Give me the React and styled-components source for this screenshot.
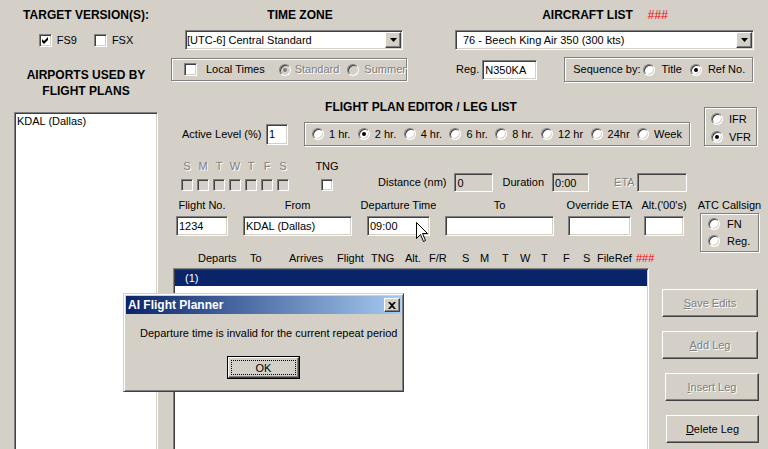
import React from 'react';
import styled, { createGlobalStyle, css } from 'styled-components';

const GlobalStyle = createGlobalStyle`
  html, body { margin: 0; padding: 0; background: #d4d0c8; }
  body { font-family: "Liberation Sans", Arial, sans-serif; font-size: 11px; color: #000; }
  * { box-sizing: border-box; }
`;

const sunken = css`
  border: 1px solid;
  border-color: #808080 #ffffff #ffffff #808080;
  box-shadow: inset 1px 1px 0 #404040, inset -1px -1px 0 #d4d0c8;
`;
const raised = css`
  border: 1px solid;
  border-color: #ffffff #404040 #404040 #ffffff;
  box-shadow: inset -1px -1px 0 #808080;
`;
const etched = css`
  border: 1px solid #808080;
  box-shadow: inset 1px 1px 0 #ffffff, 1px 1px 0 #ffffff;
`;
const disabledText = css`
  color: #808080;
  text-shadow: 1px 1px 0 #ffffff;
`;

const Window = styled.div`
  position: relative;
  width: 768px;
  height: 449px;
  overflow: hidden;
  display: flex;
  background: #d4d0c8;
`;

const LeftCol = styled.div`
  width: 172px;
  flex: none;
  display: flex;
  flex-direction: column;
  align-items: center;
  padding-top: 8px;
`;

const Heading = styled.div`
  font-weight: bold;
  font-size: 12px;
  line-height: ${p => p.$lh || 14}px;
  text-align: center;
  white-space: nowrap;
  margin-top: ${p => p.$mt || 0}px;
  padding-left: ${p => p.$pl || 0}px;
  padding-right: ${p => p.$pr || 0}px;
`;

const Red = styled.span`
  color: #ff0000;
  font-weight: normal;
  margin-left: ${p => p.$ml || 0}px;
`;

const CheckRow = styled.div`
  display: flex;
  align-items: center;
  gap: 17px;
  margin-top: 12px;
  height: 13px;
`;

const CheckItem = styled.label`
  display: flex;
  align-items: center;
  gap: 5px;
  line-height: 13px;
`;

const BoxWrap = styled.span`
  ${sunken};
  flex: none;
  display: flex;
  width: ${p => p.$s || 13}px;
  height: ${p => p.$s || 13}px;
  background: ${p => (p.$disabled ? '#d4d0c8' : '#ffffff')};
  margin-left: ${p => p.$ml || 0}px;
  margin-top: ${p => p.$mt || 0}px;
`;

const CheckBox = ({ checked, disabled, size, ml, mt }) => (
  <BoxWrap $disabled={disabled} $s={size} $ml={ml} $mt={mt}>
    {checked && (
      <svg width="11" height="11" viewBox="0 0 11 11">
        <path d="M2 4 L4 6 L8 2 L8 5 L4 9 L2 7 Z" fill="#000" />
      </svg>
    )}
  </BoxWrap>
);

const Radio = styled.span`
  position: relative;
  flex: none;
  width: 12px;
  height: 12px;
  border-radius: 50%;
  border: 1px solid;
  border-color: #808080 #ffffff #ffffff #808080;
  background: ${p => (p.$disabled ? '#d4d0c8' : '#ffffff')};
  box-shadow: inset 1px 1px 0 #404040, inset -1px -1px 0 #d4d0c8;
  margin-left: ${p => p.$ml || 0}px;
  &::after {
    content: '';
    display: ${p => (p.$checked ? 'block' : 'none')};
    position: absolute;
    left: 3px;
    top: 3px;
    width: 4px;
    height: 4px;
    border-radius: 50%;
    background: ${p => (p.$disabled ? '#808080' : '#000000')};
  }
`;

const Text = styled.span`
  white-space: nowrap;
  line-height: 13px;
  flex: none;
  margin-left: ${p => p.$ml || 0}px;
  width: ${p => (p.$w ? `${p.$w}px` : 'auto')};
  ${p => p.$disabled && disabledText};
`;

const AirportList = styled.div`
  ${sunken};
  background: #ffffff;
  width: 144px;
  height: 400px;
  flex: none;
  margin-top: 13px;
  padding: 2px 2px;
  line-height: 13px;
`;

const Main = styled.div`
  flex: 1;
  min-width: 0;
  display: flex;
  flex-direction: column;
  padding-top: 8px;
`;

const TopRow = styled.div`
  display: flex;
  align-items: flex-start;
`;

const Block = styled.div`
  display: flex;
  flex-direction: column;
  flex: none;
  width: ${p => p.$w}px;
  margin-left: ${p => p.$ml || 0}px;
`;

const ComboBox = styled.div`
  ${sunken};
  background: #ffffff;
  height: 20px;
  width: ${p => p.$w}px;
  margin-top: 8px;
  margin-left: ${p => p.$ml || 0}px;
  display: flex;
  align-items: center;
  padding: 0 1px 0 ${p => p.$pad || 1}px;
`;

const ComboText = styled.span`
  flex: 1;
  white-space: nowrap;
  overflow: hidden;
`;

const ComboButton = styled.span`
  ${raised};
  background: #d4d0c8;
  width: 16px;
  height: 16px;
  flex: none;
  display: flex;
  align-items: center;
  justify-content: center;
`;

const Combo = ({ w, ml, pad, children }) => (
  <ComboBox $w={w} $ml={ml} $pad={pad}>
    <ComboText>{children}</ComboText>
    <ComboButton>
      <svg width="7" height="4" viewBox="0 0 7 4">
        <path d="M0 0 H7 L3.5 4 Z" fill="#000" />
      </svg>
    </ComboButton>
  </ComboBox>
);

const Group = styled.div`
  ${etched};
  flex: none;
  display: flex;
  flex-direction: ${p => (p.$col ? 'column' : 'row')};
  align-items: ${p => (p.$col ? 'flex-start' : 'center')};
  justify-content: ${p => p.$justify || 'flex-start'};
  gap: ${p => p.$gap || 0}px;
  width: ${p => p.$w}px;
  height: ${p => p.$h}px;
  margin-left: ${p => p.$ml || 0}px;
  margin-top: ${p => p.$mt || 0}px;
  padding: ${p => p.$pad || '0'};
`;

const RadioItem = styled.div`
  display: flex;
  align-items: center;
  height: 12px;
`;

const Field = styled.div`
  ${sunken};
  flex: none;
  background: ${p => (p.$ro ? '#d4d0c8' : '#ffffff')};
  width: ${p => p.$w}px;
  height: ${p => p.$h || 20}px;
  margin-left: ${p => p.$ml || 0}px;
  margin-top: ${p => p.$mt || 0}px;
  padding: 0 1px 0 2px;
  display: flex;
  align-items: center;
  white-space: nowrap;
  overflow: hidden;
`;

const RegRow = styled.div`
  display: flex;
  align-items: center;
  height: 25px;
  margin-top: 7px;
`;

const FPRow = styled.div`
  display: flex;
  align-items: flex-start;
  margin-top: 18px;
`;

const ActiveRow = styled.div`
  display: flex;
  align-items: center;
  height: 24px;
  margin-top: 8px;
  padding-left: 10px;
`;

const DaysRow = styled.div`
  display: flex;
  align-items: flex-start;
  height: 32px;
  margin-top: 14px;
`;

const DayCell = styled.div`
  display: flex;
  flex-direction: column;
  align-items: center;
  flex: none;
  width: ${p => p.$w || 16}px;
  margin-left: ${p => p.$ml || 0}px;
  line-height: 12px;
`;

const InlineGroup = styled.div`
  display: flex;
  align-items: center;
  height: 19px;
  margin-top: 13px;
  margin-left: ${p => p.$ml || 0}px;
`;

const FieldsRow = styled.div`
  display: flex;
  align-items: flex-start;
  margin-top: 7px;
`;

const FieldCol = styled.div`
  display: flex;
  flex-direction: column;
  align-items: center;
  flex: none;
  width: ${p => p.$w}px;
  margin-left: ${p => p.$ml || 0}px;
`;

const HeaderRow = styled.div`
  display: flex;
  margin-left: 26px;
  line-height: 12px;
  height: 12px;
`;

const HeaderCell = styled.span`
  flex: none;
  width: ${p => p.$w}px;
  white-space: nowrap;
  color: ${p => (p.$red ? '#ff0000' : '#000')};
`;

const ListArea = styled.div`
  display: flex;
  align-items: flex-start;
  margin-top: 4px;
`;

const LegList = styled.div`
  ${sunken};
  background: #ffffff;
  width: 476px;
  height: 220px;
  flex: none;
  margin-left: 1px;
  padding: 1px 1px;
`;

const SelectedRow = styled.div`
  height: 16px;
  line-height: 16px;
  background: #0a246a;
  color: #ffffff;
  padding-left: 10px;
`;

const ButtonCol = styled.div`
  display: flex;
  flex-direction: column;
  gap: 14px;
  margin-top: 21px;
  margin-left: 13px;
`;

const Button = styled.button`
  ${raised};
  background: #d4d0c8;
  font: inherit;
  font-size: 11px;
  width: ${p => p.$w || 96}px;
  height: 28px;
  margin-left: ${p => p.$ml || 0}px;
  padding: 0;
  ${p => (p.$disabled ? disabledText : 'color: #000;')};
  u { text-decoration: underline; }
`;

const Dialog = styled.div`
  position: absolute;
  left: 123px;
  top: 293px;
  width: 281px;
  height: 99px;
  background: #d4d0c8;
  border: 1px solid;
  border-color: #d4d0c8 #404040 #404040 #d4d0c8;
  box-shadow: inset 1px 1px 0 #ffffff, inset -1px -1px 0 #808080;
  padding: 2px;
  display: flex;
  flex-direction: column;
`;

const TitleBar = styled.div`
  height: 18px;
  flex: none;
  display: flex;
  align-items: center;
  justify-content: space-between;
  padding-left: 2px;
  background: linear-gradient(to right, #0a246a, #a6caf0);
  color: #ffffff;
  font-weight: bold;
  font-size: 12px;
`;

const CloseButton = styled.span`
  ${raised};
  background: #d4d0c8;
  width: 16px;
  height: 14px;
  margin-right: 1px;
  display: flex;
  align-items: center;
  justify-content: center;
`;

const Message = styled.div`
  margin-top: 13px;
  padding-left: 14px;
  line-height: 13px;
  white-space: nowrap;
`;

const OkButton = styled.button`
  align-self: center;
  margin-top: 16px;
  width: 73px;
  height: 23px;
  padding: 0;
  background: #d4d0c8;
  border: 1px solid #000;
  font: inherit;
  font-size: 11px;
  color: #000;
  display: flex;
  align-items: stretch;
  justify-content: stretch;
`;

const OkInner = styled.span`
  flex: 1;
  display: flex;
  border: 1px solid;
  border-color: #ffffff #404040 #404040 #ffffff;
  box-shadow: inset -1px -1px 0 #808080;
  padding: 2px;
`;

const FocusRect = styled.span`
  flex: 1;
  display: flex;
  align-items: center;
  justify-content: center;
  border: 1px dotted #000;
`;

const Cursor = styled.svg`
  position: absolute;
  left: 416px;
  top: 222px;
`;

const days = ['S', 'M', 'T', 'W', 'T', 'F', 'S'];
const periods = [
  ['1 hr.', false],
  ['2 hr.', true],
  ['4 hr.', false],
  ['6 hr.', false],
  ['8 hr.', false],
  ['12 hr', false],
  ['24hr', false],
  ['Week', false],
];
const headers = [
  ['Departs', 52], ['To', 39], ['Arrives', 48], ['Flight', 34], ['TNG', 34],
  ['Alt.', 24], ['F/R', 33], ['S', 18], ['M', 22], ['T', 18], ['W', 21],
  ['T', 22], ['F', 20], ['S', 14], ['FileRef', 39], ['###', 30, true],
];
const fields = [
  { label: 'Flight No.', w: 52, ml: 4, value: '1234' },
  { label: 'From', w: 109, ml: 15, value: 'KDAL (Dallas)' },
  { label: 'Departure Time', w: 63, ml: 15, value: '09:00' },
  { label: 'To', w: 109, ml: 15, value: '' },
  { label: 'Override ETA', w: 63, ml: 14, value: '' },
  { label: "Alt.('00's)", w: 40, ml: 13, value: '' },
];

export default function App() {
  return (
    <>
      <GlobalStyle />
      <Window>
        <LeftCol>
          <Heading>TARGET VERSION(S):</Heading>
          <CheckRow>
            <CheckItem><CheckBox checked /><Text>FS9</Text></CheckItem>
            <CheckItem><CheckBox /><Text>FSX</Text></CheckItem>
          </CheckRow>
          <Heading $lh={16} $mt={20}>AIRPORTS USED BY<br />FLIGHT PLANS</Heading>
          <AirportList>KDAL (Dallas)</AirportList>
        </LeftCol>

        <Main>
          <TopRow>
            <Block $w={236} $ml={-1}>
              <Heading $pl={22}>TIME ZONE</Heading>
              <Combo w={218} ml={14} pad={1}>[UTC-6] Central Standard</Combo>
              <Group $w={236} $h={23} $mt={8} $pad="0 0 0 12px">
                <CheckBox />
                <Text $ml={9}>Local Times</Text>
                <Radio $ml={14} $checked $disabled />
                <Text $ml={4} $disabled>Standard</Text>
                <Radio $ml={8} $disabled />
                <Text $ml={5} $disabled>Summer</Text>
              </Group>
            </Block>
            <Block $w={300} $ml={48}>
              <Heading>AIRCRAFT LIST<Red $ml={15}>###</Red></Heading>
              <Combo w={299} pad={7}>76 - Beech King Air 350 (300 kts)</Combo>
              <RegRow>
                <Text $ml={1}>Reg.</Text>
                <Field $w={55} $ml={3}>N350KA</Field>
                <Group $w={189} $h={25} $ml={27} $pad="0 0 0 8px">
                  <Text>Sequence by:</Text>
                  <Radio $ml={2} />
                  <Text $ml={7}>Title</Text>
                  <Radio $ml={8} $checked />
                  <Text $ml={6}>Ref No.</Text>
                </Group>
              </RegRow>
            </Block>
          </TopRow>

          <FPRow>
            <Block $w={518}>
              <Heading $pr={20}>FLIGHT PLAN EDITOR / LEG LIST</Heading>
              <ActiveRow>
                <Text $w={84}>Active Level (%)</Text>
                <Field $w={22} $h={21}>1</Field>
                <Group $w={386} $h={24} $ml={16} $justify="space-between" $pad="0 7px">
                  {periods.map(([label, checked]) => (
                    <RadioItem key={label}>
                      <Radio $checked={checked} />
                      <Text $ml={5}>{label}</Text>
                    </RadioItem>
                  ))}
                </Group>
              </ActiveRow>
            </Block>
            <Group $col $w={53} $h={39} $ml={14} $mt={7} $gap={6} $pad="5px 0 0 6px">
              <RadioItem><Radio /><Text $ml={6}>IFR</Text></RadioItem>
              <RadioItem><Radio $checked /><Text $ml={6}>VFR</Text></RadioItem>
            </Group>
          </FPRow>

          <DaysRow>
            {days.map((d, i) => (
              <DayCell key={i} $ml={i === 0 ? 7 : 0}>
                <Text $disabled>{d}</Text>
                <CheckBox disabled size={12} mt={6} />
              </DayCell>
            ))}
            <DayCell $w={22} $ml={25}>
              <Text>TNG</Text>
              <CheckBox size={12} mt={6} />
            </DayCell>
            <InlineGroup $ml={40}>
              <Text>Distance (nm)</Text>
              <Field $ro $w={39} $h={19} $ml={8}>0</Field>
              <Text $ml={9}>Duration</Text>
              <Field $ro $w={37} $h={19} $ml={8}>0:00</Field>
              <Text $ml={25} $disabled>ETA</Text>
              <Field $ro $w={50} $h={19} $ml={2} />
            </InlineGroup>
          </DaysRow>

          <FieldsRow>
            {fields.map(f => (
              <FieldCol key={f.label} $w={f.w} $ml={f.ml}>
                <Text>{f.label}</Text>
                <Field $w={f.w} $mt={4}>{f.value}</Field>
              </FieldCol>
            ))}
            <FieldCol $w={59} $ml={16}>
              <Text>ATC Callsign</Text>
              <Group $col $w={59} $h={39} $mt={1} $gap={5} $pad="4px 0 0 7px">
                <RadioItem><Radio /><Text $ml={7}>FN</Text></RadioItem>
                <RadioItem><Radio /><Text $ml={7}>Reg.</Text></RadioItem>
              </Group>
            </FieldCol>
          </FieldsRow>

          <HeaderRow>
            {headers.map(([label, w, red], i) => (
              <HeaderCell key={i} $w={w} $red={red}>{label}</HeaderCell>
            ))}
          </HeaderRow>

          <ListArea>
            <LegList>
              <SelectedRow>(1)</SelectedRow>
            </LegList>
            <ButtonCol>
              <Button $disabled><u>S</u>ave Edits</Button>
              <Button $disabled><u>A</u>dd Leg</Button>
              <Button $disabled $w={94} $ml={3}><u>I</u>nsert Leg</Button>
              <Button $w={93} $ml={4}><u>D</u>elete Leg</Button>
            </ButtonCol>
          </ListArea>
        </Main>

        <Dialog>
          <TitleBar>
            <span>AI Flight Planner</span>
            <CloseButton>
              <svg width="8" height="7" viewBox="0 0 8 7">
                <path d="M0 0 H2 L4 2 L6 0 H8 L5 3.5 L8 7 H6 L4 5 L2 7 H0 L3 3.5 Z" fill="#000" />
              </svg>
            </CloseButton>
          </TitleBar>
          <Message>Departure time is invalid for the current repeat period</Message>
          <OkButton>
            <OkInner><FocusRect>OK</FocusRect></OkInner>
          </OkButton>
        </Dialog>

        <Cursor width="13" height="21" viewBox="0 0 13 21">
          <path d="M0.5 0.5 L0.5 16.5 L4.5 12.5 L7.5 19.5 L9.5 18.5 L6.5 11.5 L11.5 11.5 Z" fill="#fff" stroke="#000" strokeWidth="1" />
        </Cursor>
      </Window>
    </>
  );
}
